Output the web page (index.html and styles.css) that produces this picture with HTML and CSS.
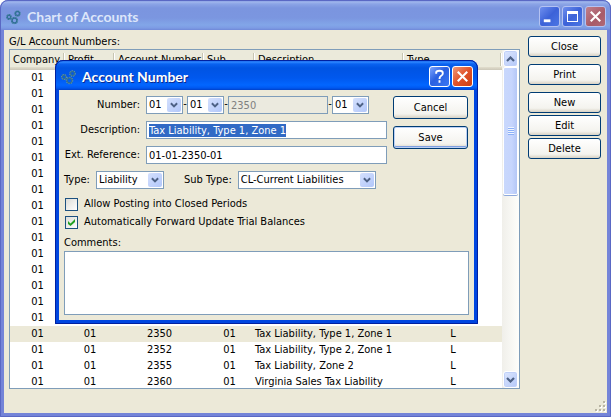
FILE: index.html
```html
<!DOCTYPE html>
<html lang="en">
<head>
<meta charset="utf-8">
<title>Chart of Accounts</title>
<link rel="stylesheet" href="styles.css">
</head>
<body>
<svg class="defs" aria-hidden="true">
  <symbol id="logo" viewBox="0 0 16 16">
    <g fill="none">
      <g stroke="#2f6f95" stroke-width="1.800">
        <circle cx="3" cy="8" r="2"/>
        <circle cx="8.500" cy="11.500" r="2.600"/>
        <circle cx="11.500" cy="4.500" r="2.200"/>
      </g>
      <g stroke="#6f9fc0" stroke-width="1" stroke-dasharray="1 1.500">
        <circle cx="3" cy="8" r="2.500"/>
        <circle cx="8.500" cy="11.500" r="3.300"/>
        <circle cx="11.500" cy="4.500" r="2.900"/>
      </g>
    </g>
  </symbol>
  <symbol id="down" viewBox="0 0 9 6"><path d="M1 1l3.500 3.500L8 1" fill="none" stroke="#4d6185" stroke-width="2.200"/></symbol>
  <symbol id="up" viewBox="0 0 9 6"><path d="M1 5l3.500-3.500L8 5" fill="none" stroke="#4d6185" stroke-width="2.200"/></symbol>
  <symbol id="close" viewBox="0 0 20 20"><path d="M5 5l10 10M15 5L5 15" stroke="#fff" stroke-width="2.200"/></symbol>
</svg>

<main class="window">
  <header class="titlebar">
    <svg class="logo"><use href="#logo"/></svg>
    <h1>Chart of Accounts</h1>
    <button class="cap" aria-label="Minimize"><svg viewBox="0 0 20 20"><path d="M4 13h7v3H4z" fill="#fff"/></svg></button>
    <button class="cap" aria-label="Maximize"><svg viewBox="0 0 19 19"><path d="M4 4h11v11H4zM5 7v7h9V7z" fill="#fff" fill-rule="evenodd"/></svg></button>
    <button class="cap cap-close" aria-label="Close window"><svg><use href="#close"/></svg></button>
  </header>
  <div class="content">
    <section class="accounts">
      <h2>G/L Account Numbers:</h2>
      <div class="list">
        <div class="rows">
          <table>
            <colgroup><col class="c-company"><col class="c-profit"><col class="c-number"><col class="c-sub"><col class="c-desc"><col></colgroup>
            <thead><tr><th>Company</th><th>Profit</th><th>Account Number</th><th>Sub</th><th>Description</th><th>Type</th></tr></thead>
            <tbody>
              <tr><td>01</td></tr>
              <tr><td>01</td></tr>
              <tr><td>01</td></tr>
              <tr><td>01</td></tr>
              <tr><td>01</td></tr>
              <tr><td>01</td></tr>
              <tr><td>01</td></tr>
              <tr><td>01</td></tr>
              <tr><td>01</td></tr>
              <tr><td>01</td></tr>
              <tr><td>01</td></tr>
              <tr><td>01</td></tr>
              <tr><td>01</td></tr>
              <tr><td>01</td></tr>
              <tr><td>01</td></tr>
              <tr><td>01</td></tr>
              <tr class="current"><td>01</td><td>01</td><td>2350</td><td>01</td><td>Tax Liability, Type 1, Zone 1</td><td>L</td></tr>
              <tr><td>01</td><td>01</td><td>2352</td><td>01</td><td>Tax Liability, Type 2, Zone 1</td><td>L</td></tr>
              <tr><td>01</td><td>01</td><td>2355</td><td>01</td><td>Tax Liability, Zone 2</td><td>L</td></tr>
              <tr><td>01</td><td>01</td><td>2360</td><td>01</td><td>Virginia Sales Tax Liability</td><td>L</td></tr>
            </tbody>
          </table>
        </div>
        <div class="scrollbar">
          <button class="arrow" aria-label="Scroll up"><svg><use href="#up"/></svg></button>
          <div class="track"><div class="thumb"><i></i></div></div>
          <button class="arrow" aria-label="Scroll down"><svg><use href="#down"/></svg></button>
        </div>
      </div>
    </section>
    <nav class="actions">
      <button class="btn">Close</button>
      <button class="btn spaced">Print</button>
      <button class="btn spaced">New</button>
      <button class="btn">Edit</button>
      <button class="btn">Delete</button>
    </nav>
  </div>
  <svg class="grip" viewBox="0 0 12 12"><path d="M9 1h2v2H9zM5 5h2v2H5zM9 5h2v2H9zM1 9h2v2H1zM5 9h2v2H5zM9 9h2v2H9z" fill="#fff"/><path d="M8 0h2v2H8zM4 4h2v2H4zM8 4h2v2H8zM0 8h2v2H0zM4 8h2v2H4zM8 8h2v2H8z" fill="#b8b4a2"/></svg>
</main>

<div class="dialog" role="dialog" aria-labelledby="dialog-title">
  <header class="titlebar active">
    <svg class="logo"><use href="#logo"/></svg>
    <h1 id="dialog-title">Account Number</h1>
    <button class="cap" aria-label="Help"><svg viewBox="0 0 20 20"><path d="M6.500 7V6q0-2 3.500-2t3.500 2.500q0 2-2 3Q10 10.500 10 12.500M10 14v2.500" fill="none" stroke="#fff" stroke-width="2"/></svg></button>
    <button class="cap cap-close" aria-label="Close dialog"><svg><use href="#close"/></svg></button>
  </header>
  <form class="form">
    <div class="top">
      <div class="fields">
        <label for="n1">Number:</label>
        <div class="number">
          <span class="pick"><select id="n1"><option>01</option></select><svg><use href="#down"/></svg></span><span class="dash">-</span>
          <span class="pick"><select aria-label="Profit"><option>01</option></select><svg><use href="#down"/></svg></span><span class="dash">-</span>
          <input class="account" aria-label="Account" value="2350" disabled><span class="dash">-</span>
          <span class="pick"><select aria-label="Sub"><option>01</option></select><svg><use href="#down"/></svg></span>
        </div>
        <label for="desc">Description:</label>
        <input id="desc" class="long" value="Tax Liability, Type 1, Zone 1">
        <label for="ext">Ext. Reference:</label>
        <input id="ext" class="long" value="01-01-2350-01">
      </div>
      <div class="buttons">
        <button type="button" class="btn">Cancel</button>
        <button type="button" class="btn default">Save</button>
      </div>
    </div>
    <div class="types">
      <label for="type">Type:</label>
      <span class="pick pick-type"><select id="type"><option>Liability</option></select><svg><use href="#down"/></svg></span>
      <label for="subtype" class="subtype">Sub Type:</label>
      <span class="pick pick-subtype"><select id="subtype"><option>CL-Current Liabilities</option></select><svg><use href="#down"/></svg></span>
    </div>
    <label class="check"><input type="checkbox">Allow Posting into Closed Periods</label>
    <label class="check"><span class="tick"><input type="checkbox" checked><svg viewBox="0 0 7 7"><path d="M0 2l2.500 2.500L7 0v3L2.500 7 0 5z" fill="#21a121"/></svg></span>Automatically Forward Update Trial Balances</label>
    <label for="comments" class="comments-label">Comments:</label>
    <textarea id="comments"></textarea>
  </form>
</div>
<script src="app.js"></script>
</body>
</html>
```
FILE: styles.css
```css
* { box-sizing: border-box; }

body {
  margin: 0;
  min-height: 100vh;
  display: flex;
  background: #fff;
  color: #000;
  font: 11px/16px "DejaVu Sans Condensed", "Noto Sans", sans-serif;
  position: relative;
}

button, input, select, textarea {
  font: inherit;
  color: inherit;
  margin: 0;
  border-radius: 0;
}

h1, h2 { margin: 0; font-weight: normal; }
.defs { position: absolute; width: 0; height: 0; }

/* Window frames */
.window {
  flex: 1;
  margin-right: 1px;
  display: flex;
  flex-direction: column;
  position: relative;
  background: #ece9d8;
  border: 4px solid #7484d8;
  border-top: 0;
  border-radius: 8px 8px 0 0;
  outline: 1px solid #5a68c4;
  outline-offset: -1px;
}

.titlebar {
  display: flex;
  align-items: center;
  gap: 2px;
  height: 30px;
  margin: 0 -3px;
  padding: 3px 4px 0 5px;
  border-radius: 7px 7px 0 0;
  background: linear-gradient(#6f88dc 0, #a0b6ec 2px, #8ba4e6 4px, #7b95df 8px, #7b96e0 18px, #82a6e8 25px, #7d9be4 28px, #7088d8);
  color: #dde6fa;
}

.titlebar h1 {
  flex: 1;
  margin-left: 3px;
  font: bold 14px/20px Lato, "Noto Sans", sans-serif;
}

.titlebar.active {
  background: linear-gradient(#0040d8 0, #2f88ff 2px, #0a62f0 4px, #0054e3 8px, #0058ee 18px, #0266ff 25px, #0058f0 28px, #0040c8);
  color: #fff;
  text-shadow: 1px 1px #0a2a90;
}

.logo { width: 16px; height: 16px; }

.cap {
  width: 21px;
  height: 21px;
  padding: 0;
  border: 1px solid #b4c2f2;
  border-radius: 3px;
  background: linear-gradient(135deg, #6f8fee, #3c62d8 50%, #4b76e4);
}
.cap svg { display: block; width: 19px; height: 19px; }
.cap-close { background: linear-gradient(135deg, #c0808c, #a85a68 60%, #b06a78); }
.active .cap { border-color: #fff; background: linear-gradient(135deg, #7ca4ff, #2a5fe0 45%, #3a78f4); }
.active .cap-close { background: linear-gradient(135deg, #f09878, #e0522a 50%, #cc4014); }

/* Main window */
.content {
  flex: 1;
  display: flex;
  gap: 8px;
  padding: 4px 6px 24px 5px;
}

.accounts { flex: 1; display: flex; flex-direction: column; }
.accounts h2 { font-size: 11px; line-height: 15px; }

.list {
  flex: 1;
  display: flex;
  border: 1px solid #7f9db9;
  background: #fff;
}

.rows { flex: 1 1 0; height: 338px; overflow: hidden; }

table { width: 100%; table-layout: fixed; border-collapse: collapse; }
.c-company { width: 55px; }
.c-profit { width: 50px; }
.c-number { width: 89px; }
.c-sub { width: 51px; }
.c-desc { width: 149px; }

th {
  height: 20px;
  padding: 0 0 0 3px;
  background: linear-gradient(90deg, transparent calc(100% - 2px), #c7c5b2 calc(100% - 2px), #c7c5b2 calc(100% - 1px), #fff calc(100% - 1px)) 0 3px / 100% 13px no-repeat, linear-gradient(#ebeadb 0 17px, #e2decd 17px, #cbc7b8 20px);
  font-weight: normal;
  text-align: left;
  white-space: nowrap;
}

td { height: 16px; padding: 0; text-align: center; white-space: nowrap; }
td:nth-child(5) { text-align: left; }
.current td { background: #ece9d8; }

.scrollbar {
  width: 17px;
  display: flex;
  flex-direction: column;
  background: linear-gradient(90deg, #f0efea, #fefefb);
  padding: 0 1px;
}

.arrow {
  height: 17px;
  padding: 0;
  border: 1px solid #fff;
  border-radius: 3px;
  background: linear-gradient(135deg, #dce6fe, #b4c8f8);
  box-shadow: inset 0 0 0 1px #c0d0f8;
}
.arrow svg { display: block; width: 9px; height: 6px; margin: auto; }

.track { flex: 1; }
.thumb {
  height: 42%;
  display: flex;
  align-items: center;
  justify-content: center;
  border: 1px solid #fff;
  border-radius: 2px;
  background: linear-gradient(90deg, #c9d8fc, #c6d5fd 60%, #b4c7f6);
  box-shadow: 0 1px #8ea9dc;
}
.thumb i { width: 6px; height: 8px; background: repeating-linear-gradient(#eef4fe 0 1px, #8cb0f8 1px 2px); }

.actions { width: 73px; display: flex; flex-direction: column; gap: 2px; padding-top: 2px; }

.btn {
  height: 21px;
  padding: 0;
  border: 1px solid #003c74;
  border-radius: 3px;
  background: linear-gradient(#fff, #f4f3ee 80%, #d8d2c4);
  line-height: 16px;
}
.btn.spaced { margin-top: 5px; }

.grip { position: absolute; right: 0; bottom: 0; width: 12px; height: 12px; }

/* Dialog */
.dialog {
  position: absolute;
  left: 55px;
  right: 134px;
  top: 60px;
  border: 4px solid #0046e0;
  border-top: 0;
  border-radius: 8px 8px 0 0;
  outline: 1px solid #0020a0;
  outline-offset: -1px;
  background: #ece9d8;
}

.form { display: flex; flex-direction: column; padding: 6px 5px 5px; }
.top { display: flex; justify-content: space-between; margin-right: 1px; }

.fields {
  display: grid;
  grid-template-columns: 76px 241px;
  gap: 7px 6px;
  align-items: center;
}
.fields label { text-align: right; white-space: nowrap; }

.number { display: flex; }
.dash { width: 4px; text-align: center; }

input:not([type]), select, textarea {
  height: 18px;
  border: 1px solid #7f9db9;
  background: #fff;
  padding: 0 2px;
  line-height: 16px;
  outline: 0;
}
.long { width: 100%; }
.account { width: 100px; }
input.account:disabled { background: #ebeadf; color: #808080; }
::selection { background: #316ac5; color: #fff; }

.pick { position: relative; display: flex; width: 37px; }
.pick select { width: 100%; appearance: none; }
.pick svg {
  position: absolute;
  right: 2px;
  top: 2px;
  width: 14px;
  height: 14px;
  padding: 4px 3px;
  border-radius: 2px;
  background: linear-gradient(135deg, #d4e0fd, #b2c7fa);
  pointer-events: none;
}
.pick-type { width: 68px; }
.pick-subtype { width: 138px; }

.buttons { width: 75px; display: flex; flex-direction: column; gap: 7px; }
.buttons .btn { height: 23px; }
.btn.default { box-shadow: inset 0 0 0 1px #bcd0f4, inset 0 -2px #7f9fe0; }

.types { display: flex; align-items: center; gap: 6px; margin-top: 7px; }
.subtype { margin-left: 14px; }

.check { display: flex; align-items: center; gap: 6px; height: 18px; }
.types + .check { margin-top: 6px; }
.check input {
  display: block;
  width: 13px;
  height: 13px;
  appearance: none;
  border: 1px solid #1c5180;
  background: linear-gradient(135deg, #dcdcd7, #fff);
}
.check > input { margin-left: 1px; }
.tick { position: relative; margin-left: 1px; }
.tick svg { position: absolute; left: 3px; top: 3px; width: 7px; height: 7px; }

.comments-label { margin-top: 4px; }
textarea { height: 64px; resize: none; }
```
FILE: app.js
```js
const description = document.getElementById("desc");
description.focus();
description.select();
```
